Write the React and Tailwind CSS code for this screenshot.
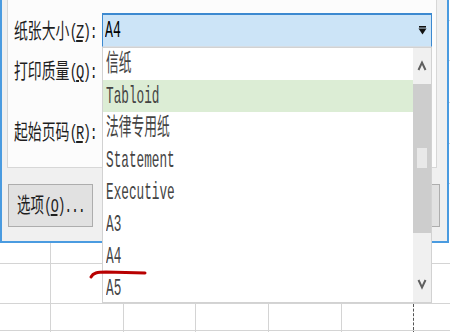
import React from 'react'

const ITEMS = ['信纸', 'Tabloid', '法律专用纸', 'Statement', 'Executive', 'A3', 'A4', 'A5']
const FONT = "font-['Liberation_Mono','Noto_Sans_CJK_SC',monospace]"

function Label({ text, hot }) {
  return (
    <div className="w-[88px] shrink-0 h-[34px] flex items-center pt-[4px] text-[21px] text-[#1e1e1e]">
      <span className="inline-block origin-left scale-x-[0.66] whitespace-nowrap leading-none">
        {text}
        <span className="tracking-[-2.5px]">(<u>{hot}</u>):</span>
      </span>
    </div>
  )
}

function Chevron({ up }) {
  return (
    <svg width="10" height="12" viewBox="0 0 10 12">
      <path d={up ? 'M1.5 10 L5 2.5 L8.5 10' : 'M1.5 2 L5 9.5 L8.5 2'} fill="none" stroke="#5f5f5f" strokeWidth="2" />
    </svg>
  )
}

export default function App() {
  const rows = [21, 40, 27, 20]
  return (
    <div className={`relative w-[450px] h-[332px] overflow-hidden bg-white ${FONT}`}>
      {/* dialog + sheet edge */}
      <div className="flex h-[243px]">
        <div className="w-[449px] h-full bg-[#f0f0f0] border-x-2 border-b-2 border-[#4a9be0] flex flex-col">
          {/* inner panel */}
          <div className="ml-[5px] w-[430px] h-[168px] shrink-0 bg-[#fcfcfc] border-x border-b border-[#d7d7d7] pl-[6px] pt-[13px] flex flex-col">
            <div className="flex">
              <Label text="纸张大小" hot="Z" />
              <div className="w-[330px] h-[34px] bg-[#cce4f7] border-t-2 border-x border-[#3c89d0] border-b border-b-[#d6dde4] flex items-center pl-[2px] pr-[4px]">
                <span className="inline-block origin-left scale-x-[0.55] text-[24px] leading-none text-black whitespace-nowrap">A4</span>
                <svg className="ml-auto" width="9" height="9" viewBox="0 0 9 9">
                  <rect x="1" y="0" width="7" height="1.6" fill="#111" />
                  <path d="M0.5 2.6 H8.5 L4.5 8.5 Z" fill="#111" />
                </svg>
              </div>
            </div>
            <div className="flex mt-[6px]">
              <Label text="打印质量" hot="Q" />
            </div>
            <div className="flex mt-[27px]">
              <Label text="起始页码" hot="R" />
            </div>
          </div>
          {/* buttons */}
          <div className="flex justify-between mt-[16px] pl-[6px] pr-[7px]">
            <div className="w-[85px] h-[43px] bg-[#e1e1e1] border border-[#adadad] flex items-center justify-center pt-[2px] text-[21px] text-[#1e1e1e]">
              <span className="inline-block shrink-0 origin-center scale-x-[0.64] whitespace-nowrap leading-none">
                选项<span className="tracking-[-2px]">(<u>O</u>)...</span>
              </span>
            </div>
            <div className="w-[85px] h-[43px] bg-[#e1e1e1] border border-[#adadad]" />
          </div>
        </div>
        <div className="flex-1 flex flex-col">
          <div className="h-[21px] border-b border-[#d4d4d4]" />
          <div className="h-[40px] border-b border-[#d4d4d4]" />
          <div className="h-[42px] border-b border-[#d4d4d4]" />
          <div className="h-[41px] border-b border-[#d4d4d4]" />
          <div className="h-[40px] border-b border-[#d4d4d4]" />
        </div>
      </div>

      {/* spreadsheet grid */}
      <div className="grid grid-cols-[51px_73px_72px_73px_73px_72px_1fr]">
        {rows.map((h, r) =>
          [0, 1, 2, 3, 4, 5, 6].map(c =>
            c === 5 ? (
              <div key={`${r}-${c}`} style={{ height: h }} className="flex justify-end border-b border-[#d4d4d4]">
                <div className="border-r border-dashed border-[#555]" />
              </div>
            ) : (
              <div
                key={`${r}-${c}`}
                style={{ height: h }}
                className={c === 6 ? 'border-b border-[#d4d4d4]' : 'border-b border-r border-[#d4d4d4]'}
              />
            )
          )
        )}
      </div>

      {/* dropdown list */}
      <div className="absolute left-[102px] top-[47px] w-[330px] h-[256px] bg-white border border-[#d2d2d2] flex overflow-hidden">
        <div className="w-[310px] flex flex-col">
          {ITEMS.map(item => (
            <div
              key={item}
              className={`h-[32px] shrink-0 flex items-center pl-[3px] pt-[2px] text-[24px] text-[#444] ${item === 'Tabloid' ? 'bg-[#dcedd5]' : ''}`}
            >
              <span className="inline-block origin-left scale-x-[0.53] whitespace-nowrap leading-none">{item}</span>
            </div>
          ))}
        </div>
        <div className="w-[18px] bg-[#f0f0f0] flex flex-col">
          <div className="h-[36px] flex items-center justify-center">
            <Chevron up />
          </div>
          <div className="h-[149px] bg-[#cdcdcd] pt-[64px] pl-[4px]">
            <div className="w-[10px] h-[20px] bg-[#e8e8e8]" />
          </div>
          <div className="flex-1" />
          <div className="h-[36px] flex items-center justify-center">
            <Chevron />
          </div>
        </div>
      </div>

      {/* red annotation stroke */}
      <svg className="absolute left-0 top-0 pointer-events-none" width="450" height="332">
        <path d="M91 277 C93 273 97 272 106 272 L145 273" fill="none" stroke="#b80000" strokeWidth="3" strokeLinecap="round" />
      </svg>
    </div>
  )
}
